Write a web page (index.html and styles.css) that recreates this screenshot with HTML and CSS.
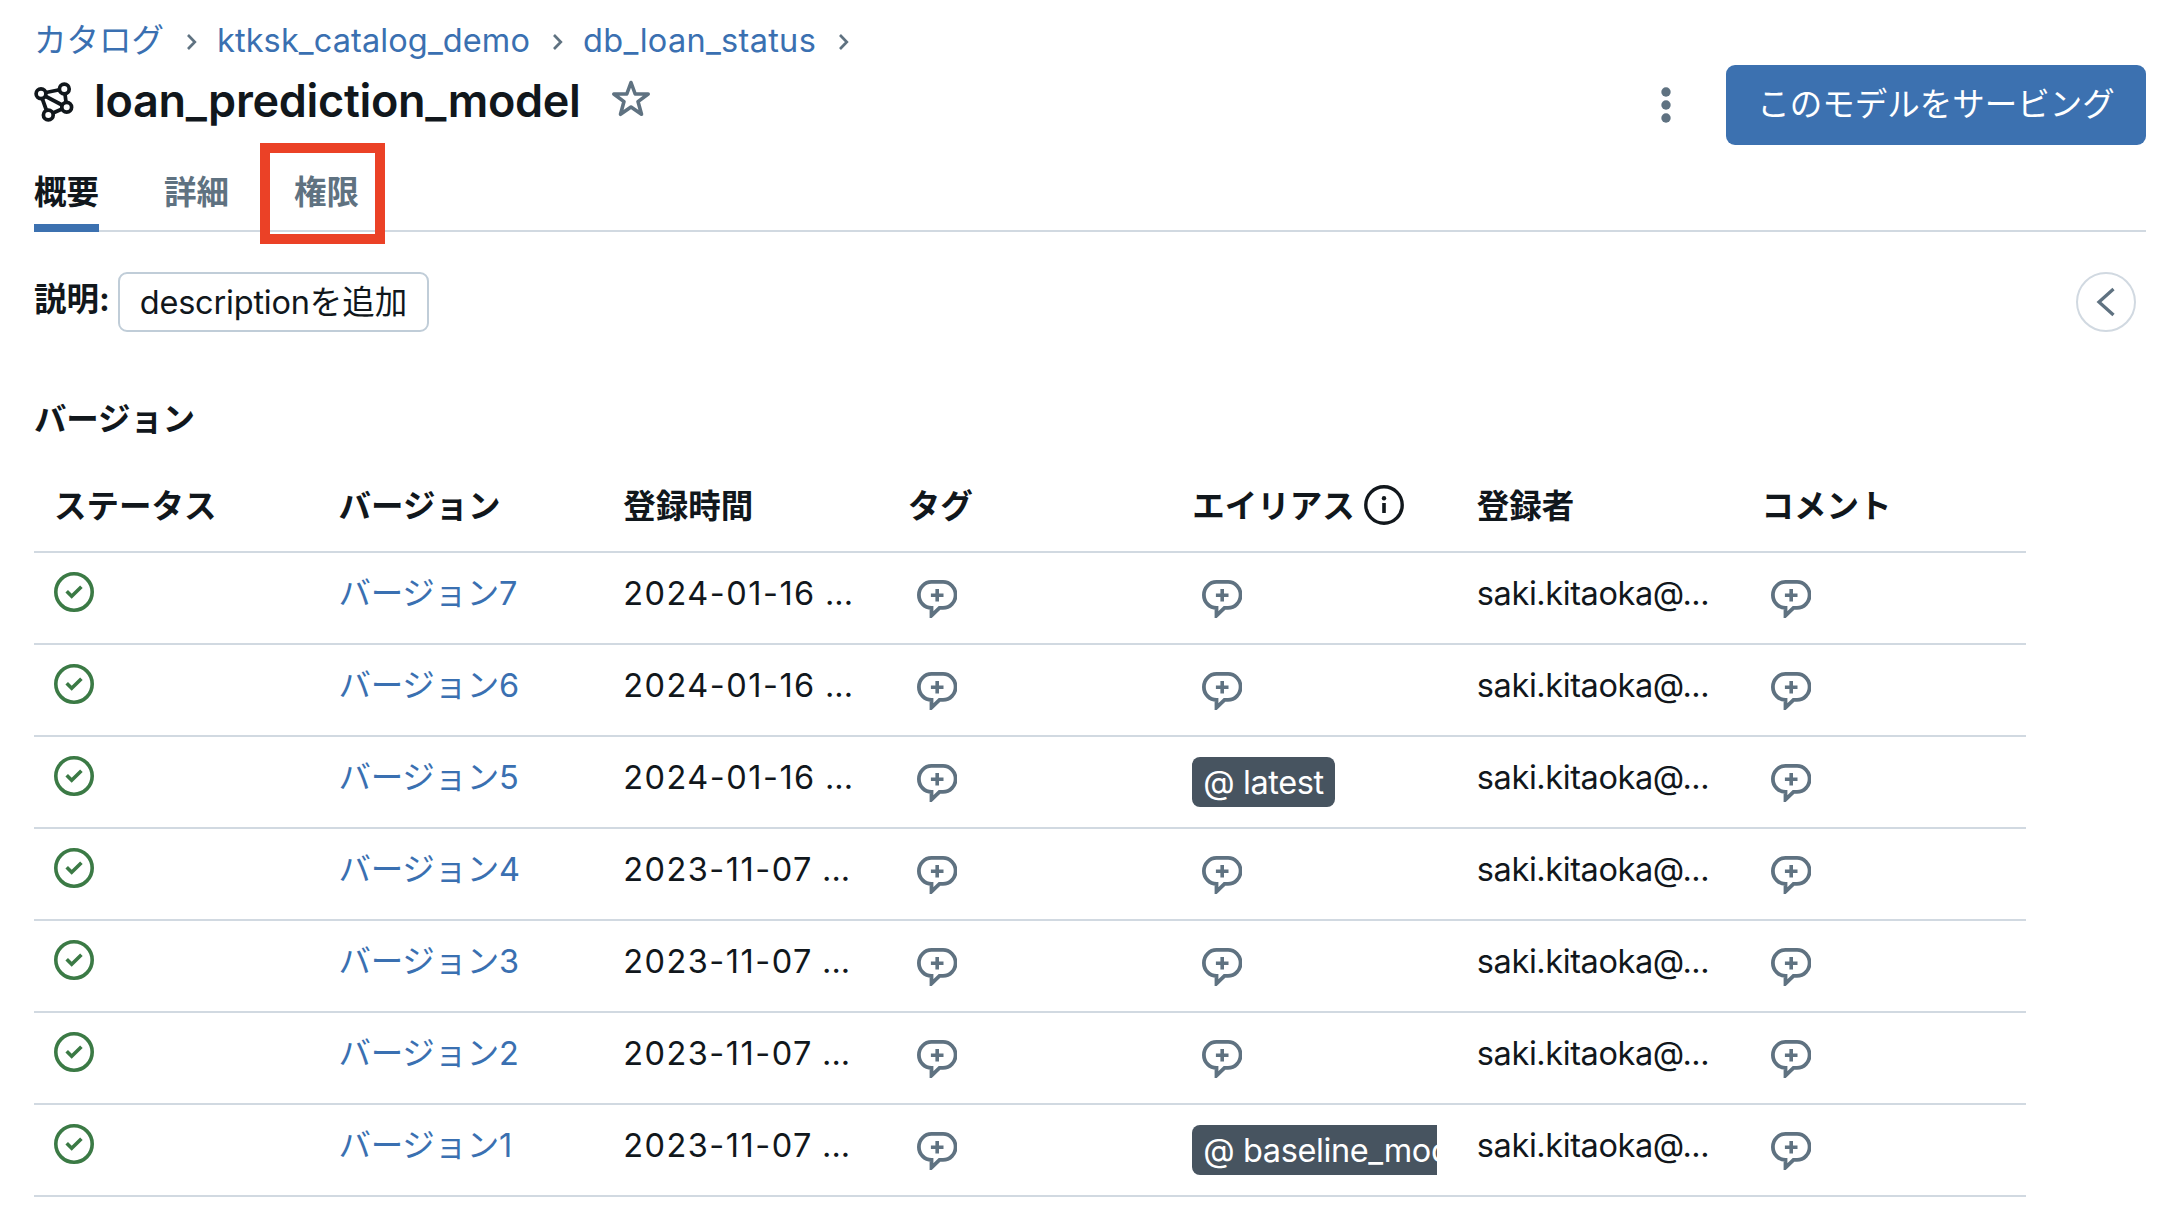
FILE: index.html
```html
<!DOCTYPE html>
<html lang="ja">
<head>
<meta charset="utf-8">
<title>loan_prediction_model</title>
<link rel="stylesheet" href="styles.css">
</head>
<body>
<svg class="sprite" aria-hidden="true">
  <symbol id="comment" viewBox="0 0 40 40">
    <path d="M14.500 3.900H26A12.600 13 0 0 1 26 29.900H22.500L14.500 37.600V29.900A12.600 13 0 0 1 14.500 3.900Z" fill="none" stroke="currentColor" stroke-width="3.800"/>
    <path d="M20.200 11v12.600M13.900 17.300h12.600" fill="none" stroke="currentColor" stroke-width="3.600"/>
  </symbol>
  <symbol id="check" viewBox="0 0 40 40">
    <circle cx="20" cy="20" r="18.200" fill="none" stroke="currentColor" stroke-width="3.600"/>
    <path d="M12.700 19.200l5 5.100 9.700-9.600" fill="none" stroke="currentColor" stroke-width="3.600"/>
  </symbol>
  <symbol id="chevron" viewBox="0 0 12 20">
    <path d="M2 3l6.800 7L2 17" fill="none" stroke="currentColor" stroke-width="2.700"/>
  </symbol>
</svg>
<main class="page">
  <nav class="crumbs">
    <a>カタログ</a><svg class="sep"><use href="#chevron"/></svg>
    <a class="crumb-catalog">ktksk_catalog_demo</a><svg class="sep"><use href="#chevron"/></svg>
    <a class="crumb-schema">db_loan_status</a><svg class="sep"><use href="#chevron"/></svg>
  </nav>
  <header class="head">
    <div class="title-wrap">
      <svg class="model-icon" viewBox="0 0 40 42" fill="none" stroke="currentColor" stroke-width="3.700">
        <path d="M12 12.500l13.500-2.700M11 16l18 9.500M8.200 18.500l4.500 12.500M31 14l1 8M19 33l9-4"/>
        <circle cx="7" cy="13.700" r="4.900"/><circle cx="30.300" cy="9" r="4.900"/>
        <circle cx="32.700" cy="27.300" r="4.900"/><circle cx="14.300" cy="35" r="4.900"/>
      </svg>
      <h1>loan_prediction_model</h1>
      <svg class="star" viewBox="0 0 40 40" fill="none" stroke="currentColor" stroke-width="3.600" stroke-linejoin="round">
        <path d="M20 3.500L24.200 15H37.200L27 22.600 30.500 35.300 20 28 9.500 35.300 13 22.600 2.800 15H15.800Z"/>
      </svg>
    </div>
    <div class="actions">
      <svg class="dots" viewBox="0 0 12 40" fill="currentColor"><circle cx="6" cy="7" r="4.700"/><circle cx="6" cy="20" r="4.700"/><circle cx="6" cy="33" r="4.700"/></svg>
      <button class="primary">このモデルをサービング</button>
    </div>
  </header>
  <div class="tabs">
    <a class="tab active">概要</a>
    <a class="tab">詳細</a>
    <a class="tab marked">権限</a>
  </div>
  <section class="desc">
    <b>説明:</b>
    <button class="outline"><span>description</span>を追加</button>
    <button class="collapse"><svg viewBox="0 0 20 32"><path d="M17.500 3L3 16l14.500 13" fill="none" stroke="currentColor" stroke-width="3.300"/></svg></button>
  </section>
  <h2>バージョン</h2>
  <div class="table">
    <div class="row header">
      <div>ステータス</div><div>バージョン</div><div>登録時間</div><div>タグ</div>
      <div class="with-info">エイリアス<svg viewBox="0 0 40 40"><circle cx="20" cy="20" r="18.200" fill="none" stroke="currentColor" stroke-width="3.400"/><path d="M20 18v10" stroke="currentColor" stroke-width="3.600"/><circle cx="20" cy="13.200" r="2.200" fill="currentColor"/></svg></div>
      <div>登録者</div><div>コメント</div>
    </div>
    <div class="row"><div><svg class="ok"><use href="#check"/></svg></div><div><a>バージョン7</a></div><div><span class="date">2024-01-16</span> ...</div><div><svg class="add"><use href="#comment"/></svg></div><div><svg class="add"><use href="#comment"/></svg></div><div class="user">saki.kitaoka@...</div><div><svg class="add"><use href="#comment"/></svg></div></div>
    <div class="row"><div><svg class="ok"><use href="#check"/></svg></div><div><a>バージョン6</a></div><div><span class="date">2024-01-16</span> ...</div><div><svg class="add"><use href="#comment"/></svg></div><div><svg class="add"><use href="#comment"/></svg></div><div class="user">saki.kitaoka@...</div><div><svg class="add"><use href="#comment"/></svg></div></div>
    <div class="row"><div><svg class="ok"><use href="#check"/></svg></div><div><a>バージョン5</a></div><div><span class="date">2024-01-16</span> ...</div><div><svg class="add"><use href="#comment"/></svg></div><div><span class="tag">@ latest</span></div><div class="user">saki.kitaoka@...</div><div><svg class="add"><use href="#comment"/></svg></div></div>
    <div class="row"><div><svg class="ok"><use href="#check"/></svg></div><div><a>バージョン4</a></div><div><span class="date">2023-11-07</span> ...</div><div><svg class="add"><use href="#comment"/></svg></div><div><svg class="add"><use href="#comment"/></svg></div><div class="user">saki.kitaoka@...</div><div><svg class="add"><use href="#comment"/></svg></div></div>
    <div class="row"><div><svg class="ok"><use href="#check"/></svg></div><div><a>バージョン3</a></div><div><span class="date">2023-11-07</span> ...</div><div><svg class="add"><use href="#comment"/></svg></div><div><svg class="add"><use href="#comment"/></svg></div><div class="user">saki.kitaoka@...</div><div><svg class="add"><use href="#comment"/></svg></div></div>
    <div class="row"><div><svg class="ok"><use href="#check"/></svg></div><div><a>バージョン2</a></div><div><span class="date">2023-11-07</span> ...</div><div><svg class="add"><use href="#comment"/></svg></div><div><svg class="add"><use href="#comment"/></svg></div><div class="user">saki.kitaoka@...</div><div><svg class="add"><use href="#comment"/></svg></div></div>
    <div class="row"><div><svg class="ok"><use href="#check"/></svg></div><div><a>バージョン1</a></div><div><span class="date">2023-11-07</span> ...</div><div><svg class="add"><use href="#comment"/></svg></div><div><span class="tag">@ baseline_model</span></div><div class="user">saki.kitaoka@...</div><div><svg class="add"><use href="#comment"/></svg></div></div>
  </div>
</main>
</body>
</html>
```
FILE: styles.css
```css
*, *::after { box-sizing: border-box; }
body {
  margin: 0;
  background: #fff;
  color: #11171c;
  font: 32.5px/40px Inter, "Noto Sans CJK JP", sans-serif;
}
a { color: #3a70b1; }
svg { display: block; flex: none; }
button { font: inherit; color: inherit; padding: 0; }
.sprite { position: absolute; width: 0; height: 0; }
.page { padding: 21px 16px 0 34px; height: 1224px; overflow: hidden; }

.crumbs { display: flex; align-items: center; height: 40px; }
.sep { width: 12px; height: 20px; margin: 2px 19px 0 22px; color: #5f7281; }
.crumb-catalog { letter-spacing: 0.1px; }
.crumb-schema { letter-spacing: 0.3px; }

.head { display: flex; justify-content: space-between; height: 84px; padding-top: 4px; }
.title-wrap { display: flex; align-items: center; height: 72px; }
.model-icon { width: 40px; height: 42px; }
h1 { margin: 0 0 0 20px; font-size: 45px; line-height: 56px; font-weight: 600; letter-spacing: -0.3px; }
.star { width: 40px; height: 40px; margin: -4px 0 0 30px; color: #5f7281; }
.actions { display: flex; align-items: center; height: 80px; gap: 54px; }
.dots { width: 12px; height: 40px; color: #5f7281; }
.primary { width: 420px; height: 80px; border: 0; border-radius: 9px; background: #3c71b0; color: #fff; }

.tabs { display: flex; gap: 65px; height: 87px; border-bottom: 2px solid #d1d9e1; }
.tab { position: relative; height: 87px; padding-top: 28px; color: #5f7281; font-weight: 700; }
.tab.active { color: #11171c; border-bottom: 8px solid #3c71b0; }
.tab.marked::after {
  content: "";
  position: absolute;
  left: -34px;
  top: -2px;
  width: 125px;
  height: 101px;
  border: 10px solid #eb4126;
}

.desc { display: flex; align-items: center; height: 60px; margin-top: 40px; padding-right: 10px; }
.desc b { margin-top: -4px; width: 84px; white-space: nowrap; }
.outline { width: 311px; height: 60px; padding-top: 1px; border: 2px solid #c0cdd8; border-radius: 9px; background: #fff; }
.outline span { letter-spacing: -0.2px; }
.collapse {
  display: grid;
  place-items: center;
  width: 60px;
  height: 60px;
  margin-left: auto;
  border: 2px solid #d1d9e1;
  border-radius: 50%;
  background: #fff;
  color: #5f7281;
}
.collapse svg { width: 20px; height: 32px; }

h2 { margin: 68px 0 0; font-size: 32.5px; line-height: 40px; font-weight: 700; letter-spacing: -0.2px; }
.table { width: 1992px; margin-top: 21px; }
.row { display: grid; grid-template-columns: repeat(7, 1fr); height: 92px; border-bottom: 2px solid #d1d9e1; }
.row > div { height: 90px; margin: 0 20px; padding-top: 21px; overflow: hidden; white-space: nowrap; }
.row a { letter-spacing: -0.3px; }
.row.header { font-weight: 700; }
.row.header > div { padding-top: 26px; }
.row .with-info { display: flex; gap: 9px; }
.with-info svg { width: 40px; height: 40px; margin-top: -2px; }
.date { letter-spacing: 1.5px; }
.row .user { letter-spacing: -0.4px; }
.ok { width: 40px; height: 40px; margin-top: -2px; color: #3b7a45; }
.add { width: 40px; height: 40px; margin: 4px 0 0 9.5px; color: #5f7281; }
.tag {
  display: inline-block;
  height: 50px;
  margin-top: -1px;
  padding: 1px 11px 0;
  border-radius: 8px;
  background: #475460;
  color: #fff;
  line-height: 50px;
  letter-spacing: -0.4px;
}
```
